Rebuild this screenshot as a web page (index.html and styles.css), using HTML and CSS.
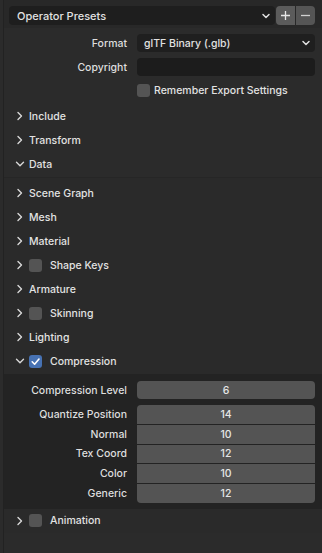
FILE: index.html
```html
<!DOCTYPE html>
<html>
<head>
<meta charset="utf-8">
<link rel="stylesheet" href="styles.css">
</head>
<body>
<div class="panel">
  <div class="presets">
    <div class="preset-box">
      <span>Operator Presets</span>
      <svg class="dd" width="10" height="10" viewBox="0 0 10 10"><path d="M2 3.5 L5 6.5 L8 3.5" fill="none" stroke="#e0e0e0" stroke-width="1.5" stroke-linecap="round" stroke-linejoin="round"/></svg>
    </div>
    <div class="pm">
      <div class="pm-btn plus"><svg width="11" height="11" viewBox="0 0 11 11"><path d="M5.5 1 V10 M1 5.5 H10" stroke="#e6e6e6" stroke-width="1.3"/></svg></div>
      <div class="pm-btn minus"><svg width="11" height="11" viewBox="0 0 11 11"><path d="M1 5.5 H10" stroke="#d0d0d0" stroke-width="1.3"/></svg></div>
    </div>
  </div>

  <div class="prop">
    <div class="label">Format</div>
    <div class="menu"><span>glTF Binary (.glb)</span>
      <svg width="10" height="10" viewBox="0 0 10 10"><path d="M2 3.5 L5 6.5 L8 3.5" fill="none" stroke="#e0e0e0" stroke-width="1.5" stroke-linecap="round" stroke-linejoin="round"/></svg>
    </div>
  </div>
  <div class="prop">
    <div class="label">Copyright</div>
    <div class="textfield"></div>
  </div>
  <div class="prop check-prop">
    <div></div>
    <div class="check-line"><span class="cb"></span><span>Remember Export Settings</span></div>
  </div>

  <div class="sections">
    <div class="hdr"><svg class="chev" width="10" height="10" viewBox="0 0 10 10"><path d="M3 1.5 L6.5 5 L3 8.5" fill="none" stroke="#d8d8d8" stroke-width="1.4" stroke-linecap="round" stroke-linejoin="round"/></svg><span>Include</span></div>
    <div class="hdr"><svg class="chev" width="10" height="10" viewBox="0 0 10 10"><path d="M3 1.5 L6.5 5 L3 8.5" fill="none" stroke="#d8d8d8" stroke-width="1.4" stroke-linecap="round" stroke-linejoin="round"/></svg><span>Transform</span></div>
    <div class="hdr"><svg class="chev" width="10" height="10" viewBox="0 0 10 10"><path d="M1.5 3.2 L5 6.7 L8.5 3.2" fill="none" stroke="#d8d8d8" stroke-width="1.4" stroke-linecap="round" stroke-linejoin="round"/></svg><span>Data</span></div>
  </div>

  <div class="data">
    <div class="hdr"><svg class="chev" width="10" height="10" viewBox="0 0 10 10"><path d="M3 1.5 L6.5 5 L3 8.5" fill="none" stroke="#d8d8d8" stroke-width="1.4" stroke-linecap="round" stroke-linejoin="round"/></svg><span>Scene Graph</span></div>
    <div class="hdr"><svg class="chev" width="10" height="10" viewBox="0 0 10 10"><path d="M3 1.5 L6.5 5 L3 8.5" fill="none" stroke="#d8d8d8" stroke-width="1.4" stroke-linecap="round" stroke-linejoin="round"/></svg><span>Mesh</span></div>
    <div class="hdr"><svg class="chev" width="10" height="10" viewBox="0 0 10 10"><path d="M3 1.5 L6.5 5 L3 8.5" fill="none" stroke="#d8d8d8" stroke-width="1.4" stroke-linecap="round" stroke-linejoin="round"/></svg><span>Material</span></div>
    <div class="hdr"><svg class="chev" width="10" height="10" viewBox="0 0 10 10"><path d="M3 1.5 L6.5 5 L3 8.5" fill="none" stroke="#d8d8d8" stroke-width="1.4" stroke-linecap="round" stroke-linejoin="round"/></svg><span class="cb"></span><span>Shape Keys</span></div>
    <div class="hdr"><svg class="chev" width="10" height="10" viewBox="0 0 10 10"><path d="M3 1.5 L6.5 5 L3 8.5" fill="none" stroke="#d8d8d8" stroke-width="1.4" stroke-linecap="round" stroke-linejoin="round"/></svg><span>Armature</span></div>
    <div class="hdr"><svg class="chev" width="10" height="10" viewBox="0 0 10 10"><path d="M3 1.5 L6.5 5 L3 8.5" fill="none" stroke="#d8d8d8" stroke-width="1.4" stroke-linecap="round" stroke-linejoin="round"/></svg><span class="cb"></span><span>Skinning</span></div>
    <div class="hdr"><svg class="chev" width="10" height="10" viewBox="0 0 10 10"><path d="M3 1.5 L6.5 5 L3 8.5" fill="none" stroke="#d8d8d8" stroke-width="1.4" stroke-linecap="round" stroke-linejoin="round"/></svg><span>Lighting</span></div>
    <div class="hdr"><svg class="chev" width="10" height="10" viewBox="0 0 10 10"><path d="M1.5 3.2 L5 6.7 L8.5 3.2" fill="none" stroke="#d8d8d8" stroke-width="1.4" stroke-linecap="round" stroke-linejoin="round"/></svg><span class="cb on"><svg width="13" height="13" viewBox="0 0 13 13"><path d="M3.2 6.8 L5.6 9.2 L10 4" fill="none" stroke="#ffffff" stroke-width="1.6" stroke-linecap="round" stroke-linejoin="round"/></svg></span><span>Compression</span></div>

    <div class="comp">
      <div class="prop">
        <div class="label">Compression Level</div>
        <div class="num single">6</div>
      </div>
      <div class="group">
        <div class="prop gp"><div class="label">Quantize Position</div><div class="num first">14</div></div>
        <div class="prop gp"><div class="label">Normal</div><div class="num">10</div></div>
        <div class="prop gp"><div class="label">Tex Coord</div><div class="num">12</div></div>
        <div class="prop gp"><div class="label">Color</div><div class="num">10</div></div>
        <div class="prop gp"><div class="label">Generic</div><div class="num last">12</div></div>
      </div>
    </div>

    <div class="hdr"><svg class="chev" width="10" height="10" viewBox="0 0 10 10"><path d="M3 1.5 L6.5 5 L3 8.5" fill="none" stroke="#d8d8d8" stroke-width="1.4" stroke-linecap="round" stroke-linejoin="round"/></svg><span class="cb"></span><span>Animation</span></div>
  </div>
</div>
</body>
</html>
```

FILE: styles.css
```css
html, body {
  margin: 0;
  padding: 0;
  background: #2b2b2b;
  width: 322px;
  height: 553px;
  overflow: hidden;
}
body {
  font-family: Inter, "Noto Sans", sans-serif;
  font-size: 10.5px;
  font-weight: 500;
  color: #e2e2e2;
}
.panel {
  height: 553px;
  border-left: 1px solid #222222;
  margin-left: 3px;
}
.presets {
  display: flex;
  align-items: center;
  padding: 6px 7px 3px 5px;
  height: 19px;
  gap: 1px;
  background: #282828;
}
.preset-box {
  flex: 1;
  height: 19px;
  background: #1e1e1e;
  border-radius: 4px;
  display: flex;
  align-items: center;
  justify-content: space-between;
  padding: 0 4px 0 8px;
  font-size: 11px;
}
.pm {
  display: flex;
  gap: 1px;
}
.pm-btn {
  width: 19px;
  height: 19px;
  display: flex;
  align-items: center;
  justify-content: center;
  background: #555555;
}
.pm-btn.plus { background: #5b5b5b; border-radius: 4px 0 0 4px; }
.pm-btn.minus { border-radius: 0 4px 4px 0; }

.prop {
  display: grid;
  grid-template-columns: 1fr 178px;
  column-gap: 10px;
  padding-right: 7px;
  align-items: center;
  margin-top: 6px;
}
.label {
  text-align: right;
  color: #dedede;
}
.menu {
  height: 18px;
  background: #1f1f1f;
  border-radius: 4px;
  display: flex;
  align-items: center;
  justify-content: space-between;
  padding: 0 4px 0 7px;
}
.textfield {
  height: 18px;
  background: #1c1c1c;
  border-radius: 4px;
}
.check-prop { margin-top: 8px; }
.check-line {
  display: flex;
  align-items: center;
  gap: 4px;
  height: 13px;
}
.cb {
  width: 13px;
  height: 13px;
  background: #545454;
  border-radius: 3px;
  display: inline-flex;
  flex: none;
}
.cb.on { background: #4772b3; }

.sections { margin-top: 7px; }
.hdr {
  height: 24px;
  display: flex;
  align-items: center;
  padding-left: 11px;
}
.chev { margin-right: 4px; flex: none; }
.hdr .cb { margin-right: 8px; }

.data {
  margin-top: 1px;
  border-top: 1px solid #262626;
  background: #2a2a2a;
  padding-top: 3px;
}
.comp {
  background: #232323;
  padding: 7px 0 6px 0;
  margin-top: 1px;
}
.comp .prop { margin-top: 0; }
.num {
  height: 18px;
  background: #545454;
  display: flex;
  align-items: center;
  justify-content: center;
  color: #e6e6e6;
}
.num.single { border-radius: 4px; }
.group {
  margin-top: 6px;
  display: flex;
  flex-direction: column;
  gap: 1px;
}
.gp .num { height: 18.8px; }
.num.first { border-radius: 4px 4px 0 0; }
.num.last { border-radius: 0 0 4px 4px; }
```
